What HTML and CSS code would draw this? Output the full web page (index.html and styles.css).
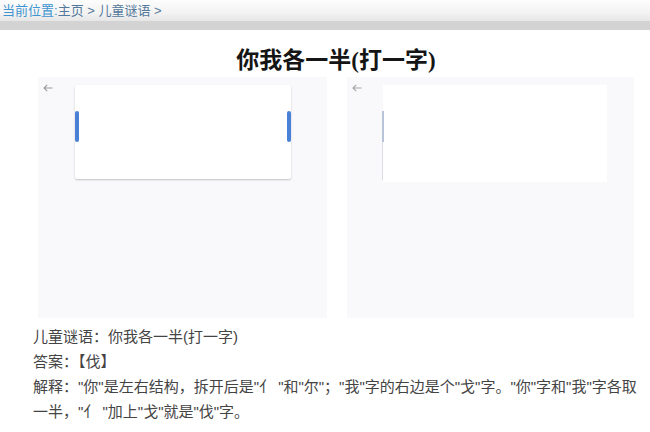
FILE: index.html
```html
<!DOCTYPE html>
<html lang="zh-CN">
<head>
    <meta charset="UTF-8">
    <meta name="viewport" content="width=device-width, initial-scale=1.0">
    <title>你我各一半(打一字)</title>
    <link rel="stylesheet" href="styles.css">
</head>
<body>
    <div class="crumb">
        <span class="crumb-label">当前位置:</span><span class="crumb-path">主页 &gt; 儿童谜语 &gt;</span>
    </div>
    <div class="crumb-band"></div>

    <div class="content">
        <h1 class="title">你我各一半(打一字)</h1>

        <div class="shots">
            <div class="shot">
                <svg class="back" width="10" height="8" viewBox="0 0 10 8">
                    <path d="M9.5 4H1.2M4.2 0.8L1 4l3.2 3.2" fill="none" stroke="#9a9a9a" stroke-width="1.1"/>
                </svg>
                <div class="card">
                    <span class="handle handle-left"></span>
                    <span class="handle handle-right"></span>
                </div>
            </div>
            <div class="shot">
                <svg class="back" width="10" height="8" viewBox="0 0 10 8">
                    <path d="M9.5 4H1.2M4.2 0.8L1 4l3.2 3.2" fill="none" stroke="#a5a5a5" stroke-width="1.1"/>
                </svg>
                <div class="sheet">
                    <span class="edge"></span>
                </div>
            </div>
        </div>

        <div class="text">
            <p>儿童谜语：你我各一半(打一字)</p>
            <p>答案：【伐】</p>
            <p>解释："你"是左右结构，拆开后是"亻 "和"尔"；"我"字的右边是个"戈"字。"你"字和"我"字各取一半，"亻 "加上"戈"就是"伐"字。</p>
        </div>
    </div>
</body>
</html>
```

FILE: styles.css
```css
* {
    margin: 0;
    padding: 0;
    box-sizing: border-box;
}

body {
    font-family: "Liberation Sans", "Noto Sans CJK SC", sans-serif;
    background: #fff;
    color: #333;
}

.crumb {
    height: 21px;
    padding: 2px 0 0 2px;
    font-size: 13px;
    line-height: 18px;
    background: linear-gradient(180deg, #fdfdfd 0%, #f3f3f3 60%, #e6e6e6 100%);
}

.crumb-label {
    color: #3f95cf;
}

.crumb-path {
    color: #55799b;
}

.crumb-band {
    height: 9px;
    background: #d3d3d3;
}

.content {
    width: 606px;
    margin-left: 33px;
}

.title {
    margin-top: 15px;
    font-family: "Liberation Serif", "Noto Sans CJK SC", serif;
    font-size: 23px;
    font-weight: bold;
    line-height: 32px;
    text-align: center;
    color: #151515;
}

.shots {
    display: grid;
    grid-template-columns: 289px 287px;
    gap: 20px;
    padding-left: 5px;
}

.shot {
    position: relative;
    height: 241px;
    background: #f9f8fb;
}

.back {
    position: absolute;
    left: 5px;
    top: 7px;
}

.card {
    position: relative;
    margin: 8px 0 0 37px;
    width: 216px;
    height: 94px;
    background: #fff;
    border-radius: 2px;
    box-shadow: 0 1px 2px rgba(0, 0, 0, 0.22);
}

.handle {
    position: absolute;
    top: 26px;
    width: 4px;
    height: 31px;
    border-radius: 2px;
    background: #4a80d6;
}

.handle-left {
    left: 0;
}

.handle-right {
    right: 0;
}

.sheet {
    position: relative;
    margin: 8px 0 0 36px;
    width: 224px;
    height: 97px;
    background: #fff;
}

.edge {
    position: absolute;
    left: -1px;
    top: 26px;
    width: 1px;
    height: 69px;
    background: #d9dce2;
}

.edge::before {
    content: "";
    position: absolute;
    left: 0;
    top: 0;
    width: 2px;
    height: 31px;
    background: #b7c3d6;
}

.text {
    margin-top: 6px;
    font-size: 15px;
    line-height: 25px;
    color: #444;
}
```
